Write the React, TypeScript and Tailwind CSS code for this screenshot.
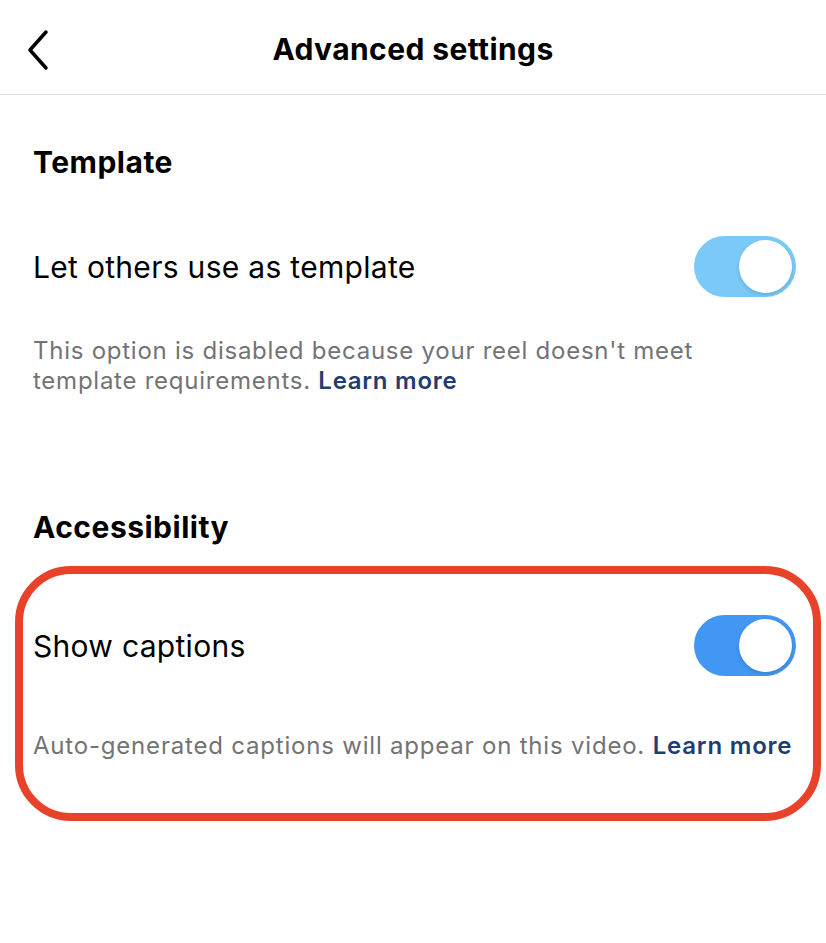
import React from "react";

function Toggle({ color }: { color: string }) {
  return (
    <div className={`relative h-[61px] w-[102px] shrink-0 rounded-full ${color}`}>
      <div className="absolute right-[4px] top-[4px] h-[53px] w-[53px] rounded-full bg-white shadow-[0_2px_4px_rgba(0,0,0,0.15)]" />
    </div>
  );
}

export default function App() {
  return (
    <div className="h-[943px] w-[826px] bg-white text-black" style={{ fontFamily: 'Inter, "Noto Sans", sans-serif' }}>
      <div className="relative flex h-[95px] items-center justify-center border-b border-[#dbdbdb] pt-[5px]">
        <svg className="absolute left-[24px] top-[29px]" width="28" height="42" viewBox="0 0 28 42" fill="none">
          <path d="M22 3 L6 21 L22 39" stroke="#000" strokeWidth="3.5" strokeLinecap="round" strokeLinejoin="round" />
        </svg>
        <div className="text-[30px] font-bold tracking-[0.4px]">Advanced settings</div>
      </div>

      <div className="px-[33px] pt-[49px]">
        <div className="text-[30px] font-bold leading-[36px] tracking-[0.5px]">Template</div>
        <div className="mt-[56px] flex items-center justify-between">
          <div className="text-[30px] leading-[36px] tracking-[0.3px]">Let others use as template</div>
          <div className="mr-[-3px]"><Toggle color="bg-[#7ac9f9]" /></div>
        </div>
        <div className="mt-[39px] text-[24px] leading-[30px] tracking-[0.75px] text-[#737373]">
          This option is disabled because your reel doesn't meet
          <br />
          template requirements.{" "}
          <span className="font-semibold text-[#1f3d6e]">Learn more</span>
        </div>

        <div className="mt-[113px] text-[30px] font-bold leading-[36px] tracking-[0.5px]">Accessibility</div>
      </div>

      <div className="ml-[15px] mr-[5px] mt-[21px] h-[255px] rounded-[56px] border-[8px] border-[#e8432a] pl-[10px] pr-[17px]">
        <div className="mt-[41px] flex items-center justify-between">
          <div className="text-[30px] leading-[36px] tracking-[0.3px]">Show captions</div>
          <Toggle color="bg-[#4297f3]" />
        </div>
        <div className="mt-[55px] whitespace-nowrap text-[24px] leading-[30px] tracking-[0.8px] text-[#737373]">
          Auto-generated captions will appear on this video.{" "}
          <span className="font-semibold text-[#1f3d6e]">Learn more</span>
        </div>
      </div>
    </div>
  );
}
